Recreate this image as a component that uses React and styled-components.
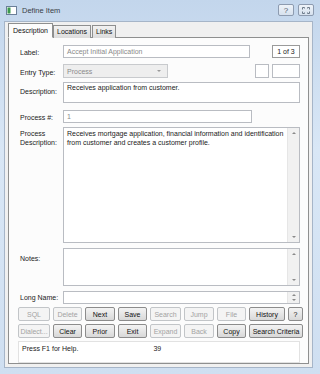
import styled, { createGlobalStyle } from "styled-components"

const Global = createGlobalStyle`
    html, body {
        margin: 0;
        padding: 0;
        background: #d3e2f3;
    }
    * {
        box-sizing: border-box;
    }
`

const App = () => {
    return (
        <>
            <Global />
            <Window>
                <TitleBar>
                    <AppIcon>
                        <svg width="11" height="9" viewBox="0 0 11 9">
                            <rect x="0.5" y="0.5" width="10" height="8" fill="#fff" stroke="#6b7f99" />
                            <rect x="1.5" y="1.5" width="3" height="6" fill="#3c9a4e" />
                        </svg>
                    </AppIcon>
                    <Title>Define Item</Title>
                    <Controls>
                        <CtrlButton>?</CtrlButton>
                        <CtrlButton>
                            <svg width="8" height="7" viewBox="0 0 8 7">
                                <path d="M0.5 0.5h2v1M0.5 0.5v2M7.5 0.5h-2v1M7.5 0.5v2M0.5 6.5h2v-1M0.5 6.5v-2M7.5 6.5h-2v-1M7.5 6.5v-2" fill="none" stroke="#6d7a8a" strokeWidth="1" />
                            </svg>
                        </CtrlButton>
                    </Controls>
                </TitleBar>
                <Client>
                    <Tabs>
                        <Tab $active>Description</Tab>
                        <Tab>Locations</Tab>
                        <Tab>Links</Tab>
                    </Tabs>
                    <Panel>
                        <Row $mt={7}>
                            <Label>Label:</Label>
                            <Line>
                                <Input $w={187} $h={13} $muted>Accept Initial Application</Input>
                                <Spacer />
                                <Counter>1 of 3</Counter>
                            </Line>
                        </Row>
                        <Row $mt={6}>
                            <Label $pt={3}>Entry Type:</Label>
                            <Line>
                                <Select>
                                    <span>Process</span>
                                    <Caret />
                                </Select>
                                <Spacer />
                                <Box $w={14} />
                                <Box $w={28} />
                            </Line>
                        </Row>
                        <Row $mt={4}>
                            <Label $pt={4}>Description:</Label>
                            <Input $h={21} $top>Receives application from customer.</Input>
                        </Row>
                        <Row $mt={7}>
                            <Label>Process #:</Label>
                            <Input $w={189} $h={13} $muted>1</Input>
                        </Row>
                        <Row $mt={4}>
                            <Label $pt={2}>Process<br />Description:</Label>
                            <Memo $h={116}>
                                <MemoText>
                                    Receives mortgage application, financial information and identification
                                    from customer and creates a customer profile.
                                </MemoText>
                                <ScrollBar>
                                    <Arrow $up />
                                    <Arrow />
                                </ScrollBar>
                            </Memo>
                        </Row>
                        <Row $mt={5}>
                            <Label $pt={5}>Notes:</Label>
                            <Memo $h={38}>
                                <MemoText />
                                <ScrollBar>
                                    <Arrow $up />
                                    <Arrow />
                                </ScrollBar>
                            </Memo>
                        </Row>
                        <Row $mt={5}>
                            <Label $pt={2}>Long Name:</Label>
                            <Memo $h={13}>
                                <MemoText />
                                <Spin>
                                    <Arrow $up />
                                    <Arrow />
                                </Spin>
                            </Memo>
                        </Row>
                        <Buttons>
                            <Button disabled>SQL</Button>
                            <Button disabled>Delete</Button>
                            <Button>Next</Button>
                            <Button>Save</Button>
                            <Button disabled>Search</Button>
                            <Button disabled>Jump</Button>
                            <Button disabled>File</Button>
                            <Button>History</Button>
                            <Button>?</Button>
                            <Button disabled>Dialect...</Button>
                            <Button>Clear</Button>
                            <Button>Prior</Button>
                            <Button>Exit</Button>
                            <Button disabled>Expand</Button>
                            <Button disabled>Back</Button>
                            <Button>Copy</Button>
                            <Button $span>Search Criteria</Button>
                        </Buttons>
                        <Status>
                            <StatusText>Press F1 for Help.</StatusText>
                            <StatusText>39</StatusText>
                        </Status>
                    </Panel>
                </Client>
            </Window>
        </>
    )
}

export default App

const Window = styled.div`
    width: 320px;
    height: 374px;
    background: linear-gradient(#c3d6ec, #d9e7f6 40%, #cfdff1);
    padding: 0 7px 6px 4px;
    display: flex;
    flex-direction: column;
    font-family: "Liberation Sans", Arial, sans-serif;
    color: #1a1a1a;
    font-size: 7px;
`
const TitleBar = styled.div`
    height: 21px;
    display: flex;
    align-items: center;
    padding: 0 0 1px 2px;
`
const AppIcon = styled.div`
    width: 11px;
    height: 9px;
    display: flex;
`
const Title = styled.div`
    margin-left: 5px;
    font-size: 7.5px;
    color: #3a3f47;
    flex: 1;
`
const Controls = styled.div`
    display: flex;
    gap: 4px;
    margin-right: -1px;
`
const CtrlButton = styled.div`
    width: 16px;
    height: 12px;
    border: 1px solid #8d9bb0;
    border-radius: 2px;
    background: linear-gradient(#eef3f9, #d6e1ee);
    display: flex;
    align-items: center;
    justify-content: center;
    font-size: 8px;
    color: #55606e;
`
const Client = styled.div`
    flex: 1;
    background: #f0f0f0;
    border: 1px solid #a6b5c8;
    padding: 1px 3px 3px 3px;
    display: flex;
    flex-direction: column;
`
const Tabs = styled.div`
    display: flex;
    align-items: flex-end;
    height: 15px;
    position: relative;
    z-index: 1;
`
const Tab = styled.div`
    height: ${p => (p.$active ? "15px" : "13px")};
    padding: ${p => (p.$active ? "3px 4px 0" : "2px 3px 0")};
    margin-right: ${p => (p.$active ? "0" : "1px")};
    border: 1px solid #8e8f8f;
    border-bottom: ${p => (p.$active ? "1px solid #fcfcfc" : "none")};
    background: ${p => (p.$active ? "#fcfcfc" : "linear-gradient(#f2f2f2, #dcdcdc)")};
    color: #111;
    font-size: 7px;
    white-space: nowrap;
`
const Panel = styled.div`
    flex: 1;
    margin-top: -1px;
    background: #fcfcfc;
    border: 1px solid #8e8f8f;
    padding: 0 8px 0 11px;
    display: flex;
    flex-direction: column;
`
const Row = styled.div`
    display: grid;
    grid-template-columns: 43px 1fr;
    margin-top: ${p => p.$mt}px;
`
const Label = styled.div`
    padding-top: ${p => p.$pt || 2}px;
    line-height: ${p => (p.$pt === 2 ? "9px" : "11px")};
    color: #222;
    white-space: nowrap;
`
const Line = styled.div`
    display: flex;
    align-items: center;
    gap: 3px;
`
const Spacer = styled.div`
    flex: 1;
`
const Input = styled.div`
    width: ${p => (p.$w ? `${p.$w}px` : "auto")};
    height: ${p => p.$h}px;
    border: 1px solid #b9bcc2;
    background: #fff;
    padding: ${p => (p.$top ? "1px 3px" : "0 3px")};
    display: flex;
    align-items: ${p => (p.$top ? "flex-start" : "center")};
    color: ${p => (p.$muted ? "#8a8a8a" : "#1a1a1a")};
    white-space: nowrap;
    overflow: hidden;
`
const Counter = styled.div`
    width: 28px;
    height: 13px;
    border: 1px solid #9a9a9a;
    background: #fff;
    display: flex;
    align-items: center;
    justify-content: center;
`
const Select = styled.div`
    width: 105px;
    height: 14px;
    border: 1px solid #c8cacd;
    background: #eeeeee;
    padding: 0 3px;
    display: flex;
    align-items: center;
    justify-content: space-between;
    color: #8a8a8a;
`
const Caret = styled.div`
    width: 0;
    height: 0;
    border-left: 2px solid transparent;
    border-right: 2px solid transparent;
    border-top: 2px solid #9a9a9a;
    margin-right: 3px;
`
const Box = styled.div`
    width: ${p => p.$w}px;
    height: 14px;
    border: 1px solid #b9bcc2;
    background: #fff;
`
const Memo = styled.div`
    height: ${p => p.$h}px;
    border: 1px solid #b9bcc2;
    background: #fff;
    display: flex;
`
const MemoText = styled.div`
    flex: 1;
    padding: 1px 3px;
    line-height: 9px;
    color: #1a1a1a;
`
const ScrollBar = styled.div`
    width: 12px;
    background: #f1f1f1;
    border-left: 1px solid #e6e6e6;
    display: flex;
    flex-direction: column;
    justify-content: space-between;
    align-items: center;
    padding: 4px 0;
`
const Spin = styled.div`
    width: 12px;
    background: #f1f1f1;
    border-left: 1px solid #e6e6e6;
    display: flex;
    flex-direction: column;
    justify-content: space-around;
    align-items: center;
`
const Arrow = styled.div`
    width: 0;
    height: 0;
    border-left: 2px solid transparent;
    border-right: 2px solid transparent;
    ${p => (p.$up ? "border-bottom: 2px solid #8a8a8a;" : "border-top: 2px solid #8a8a8a;")}
`
const Buttons = styled.div`
    margin-top: 3px;
    margin-left: -2px;
    display: grid;
    grid-template-columns: 32px 29px 30px 29px 31px 30px 29px 36px 15px;
    column-gap: 3px;
    row-gap: 3px;
`
const Button = styled.button`
    grid-column: ${p => (p.$span ? "span 2" : "auto")};
    height: 14px;
    padding: 0;
    font-family: "Liberation Sans", Arial, sans-serif;
    font-size: 7px;
    border-radius: 2px;
    border: 1px solid ${p => (p.disabled ? "#c2c5c8" : "#8c8c8c")};
    background: ${p => (p.disabled ? "#f4f4f4" : "linear-gradient(#f3f3f3, #e6e6e6 50%, #d8d8d8)")};
    color: ${p => (p.disabled ? "#a3a3a3" : "#111")};
    white-space: nowrap;
`
const Status = styled.div`
    margin: 3px 0 0 -2px;
    height: 22px;
    border: 1px solid #e2e2e2;
    background: #fff;
    display: flex;
    gap: 75px;
    padding: 3px 0 0 3px;
`
const StatusText = styled.div`
    color: #1a1a1a;
    font-size: 7px;
`
